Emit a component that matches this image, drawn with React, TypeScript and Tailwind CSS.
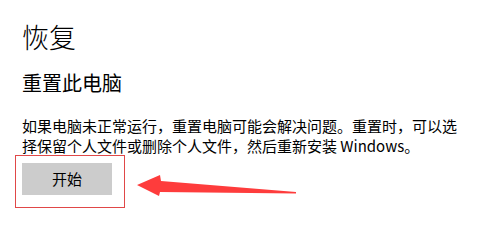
import * as React from "react"

const cjk = { fontFamily: '"Noto Sans CJK SC", "Noto Sans", sans-serif' }

// Red callout arrow pointing at the button
function CalloutArrow() {
  return (
    <svg
      className="absolute left-0 top-0 pointer-events-none"
      width="497"
      height="233"
      viewBox="0 0 497 233"
    >
      <polygon
        points="137,185 160,175 161,181 296,192 296,193.5 160,192 159,196"
        fill="#fe3c3c"
      />
    </svg>
  )
}

export default function App() {
  return (
    <div className="relative w-[497px] h-[233px] bg-white text-black overflow-hidden" style={cjk}>
      <div className="pl-[22px] pt-[19px]">
        {/* Page title */}
        <h1 className="text-[27px] leading-[36px] font-light">恢复</h1>

        {/* Section header */}
        <h2 className="mt-[14px] text-[20px] leading-[28px] font-normal">重置此电脑</h2>

        <p className="mt-[19px] w-[442px] text-[15px] leading-[20px]">
          如果电脑未正常运行，重置电脑可能会解决问题。重置时，可以选择保留个人文件或删除个人文件，然后重新安装 Windows。
        </p>

        {/* Highlight frame around the button */}
        <div className="-ml-[7px] -mt-[1px] w-[110px] h-[53px] border border-[#e04848] pl-[6px] pt-[7px]">
          <button className="w-[90px] h-[32px] bg-[#cccccc] text-[15px] leading-[32px] text-black">
            开始
          </button>
        </div>
      </div>

      <CalloutArrow />
    </div>
  )
}
